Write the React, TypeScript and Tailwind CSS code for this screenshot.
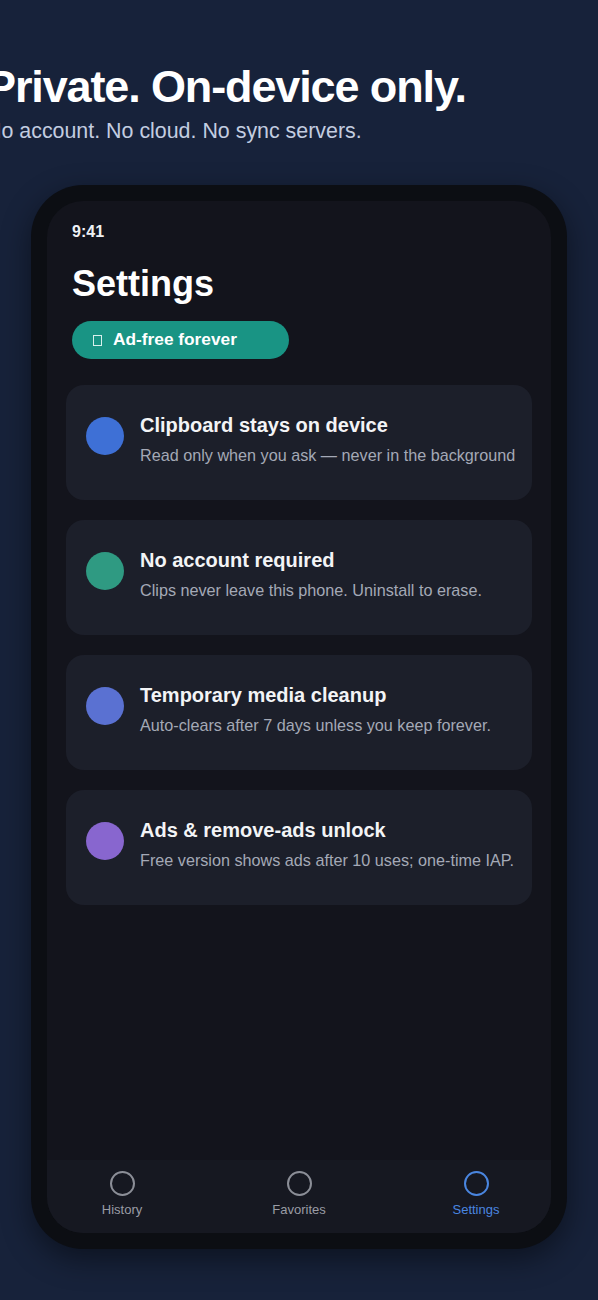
import React from 'react';

interface Feature {
    title: string;
    subtitle: string;
    dot: string;
}

const features: Feature[] = [
    { title: 'Clipboard stays on device', subtitle: 'Read only when you ask — never in the background', dot: 'bg-[#3e70d6]' },
    { title: 'No account required', subtitle: 'Clips never leave this phone. Uninstall to erase.', dot: 'bg-[#2f9a82]' },
    { title: 'Temporary media cleanup', subtitle: 'Auto-clears after 7 days unless you keep forever.', dot: 'bg-[#5a71d2]' },
    { title: 'Ads & remove-ads unlock', subtitle: 'Free version shows ads after 10 uses; one-time IAP.', dot: 'bg-[#8866cf]' },
];

const FeatureCard: React.FC<{ feature: Feature }> = ({ feature }) => (
    <div className="h-[115px] rounded-[18px] bg-[#1c1f2a] pl-[20px] pt-[27px] flex items-start gap-[16px]">
        <div className={`w-[38px] h-[38px] rounded-full mt-[5px] shrink-0 ${feature.dot}`} />
        <div className="flex flex-col whitespace-nowrap">
            <span className="text-[20px] leading-[26px] font-bold text-[#f3f4f6]">{feature.title}</span>
            <span className="text-[16.2px] leading-[22px] mt-[6px] text-[#a4a9b6]">{feature.subtitle}</span>
        </div>
    </div>
);

const NavItem: React.FC<{ label: string; active?: boolean }> = ({ label, active }) => (
    <div className="w-[100px] flex flex-col items-center">
        <div className={`w-[25px] h-[25px] rounded-full border-2 ${active ? 'border-[#4a86e0]' : 'border-[#8b8e97]'}`} />
        <span className={`text-[13px] leading-[16px] mt-[6px] ${active ? 'text-[#4a86e0]' : 'text-[#9a9ca5]'}`}>{label}</span>
    </div>
);

export default function App() {
    return (
        <div className="min-h-[1300px] w-[598px] overflow-hidden bg-[#17223a] font-['Liberation_Sans',Arial,sans-serif]">
            <div className="ml-[-14px] pt-[58px] whitespace-nowrap">
                <h1 className="text-[45px] leading-[58px] font-bold tracking-[-0.025em] text-white">Private. On-device only.</h1>
                <p className="mt-[1px] text-[21.4px] leading-[28px] text-[#c3cde0]">No account. No cloud. No sync servers.</p>
            </div>

            <div className="mt-[40px] ml-[31px] w-[536px] h-[1064px] p-[16px] rounded-[52px] bg-[#0c0e13] shadow-[0_10px_30px_rgba(0,0,0,0.45)] flex flex-col">
                <div className="flex-1 rounded-[36px] bg-[#13141c] overflow-hidden flex flex-col">
                    <div className="pl-[25px] pt-[21px]">
                        <div className="text-[16px] leading-[20px] font-bold text-[#eef0f4]">9:41</div>
                        <h2 className="mt-[20px] text-[36px] leading-[44px] font-bold text-white">Settings</h2>
                        <div className="mt-[15px] w-[217px] h-[38px] rounded-full bg-[#199484] flex items-center pl-[21px]">
                            <span className="w-[9px] h-[11px] border border-[#d8f0ec]" />
                            <span className="ml-[11px] text-[17.3px] font-bold text-white">Ad-free forever</span>
                        </div>
                    </div>

                    <div className="mt-[26px] mx-[19px] flex flex-col gap-[20px]">
                        {features.map((f) => (
                            <FeatureCard key={f.title} feature={f} />
                        ))}
                    </div>

                    <nav className="mt-auto h-[73px] bg-[#161821] px-[25px] pt-[11px] flex justify-between">
                        <NavItem label="History" />
                        <NavItem label="Favorites" />
                        <NavItem label="Settings" active />
                    </nav>
                </div>
            </div>
        </div>
    );
}
